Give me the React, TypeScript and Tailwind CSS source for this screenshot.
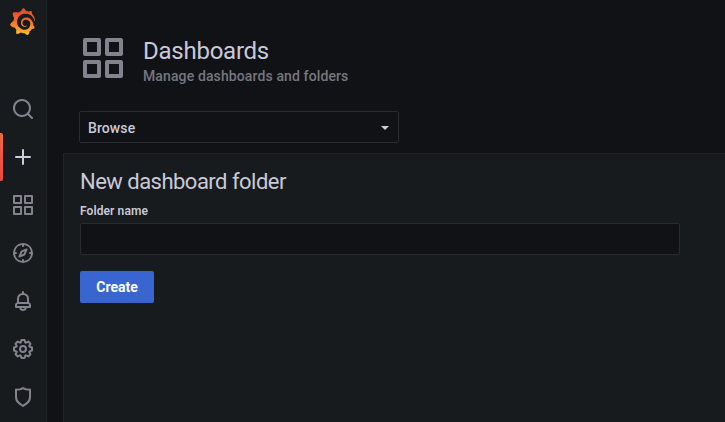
import React from 'react';
import { SiGrafana } from 'react-icons/si';

const icons = {
  search:
    'M21.71,20.29,18,16.61A9,9,0,1,0,16.61,18l3.68,3.68a1,1,0,0,0,1.42,0A1,1,0,0,0,21.71,20.29ZM11,18a7,7,0,1,1,7-7A7,7,0,0,1,11,18Z',
  plus: 'M19,11H13V5a1,1,0,0,0-2,0v6H5a1,1,0,0,0,0,2h6v6a1,1,0,0,0,2,0V13h6a1,1,0,0,0,0-2Z',
  apps: 'M10,13H3a1,1,0,0,0-1,1v7a1,1,0,0,0,1,1h7a1,1,0,0,0,1-1V14A1,1,0,0,0,10,13ZM9,20H4V15H9ZM21,2H14a1,1,0,0,0-1,1v7a1,1,0,0,0,1,1h7a1,1,0,0,0,1-1V3A1,1,0,0,0,21,2ZM20,9H15V4h5Zm1,4H14a1,1,0,0,0-1,1v7a1,1,0,0,0,1,1h7a1,1,0,0,0,1-1V14A1,1,0,0,0,21,13Zm-1,7H15V15h5ZM10,2H3A1,1,0,0,0,2,3v7a1,1,0,0,0,1,1h7a1,1,0,0,0,1-1V3A1,1,0,0,0,10,2ZM9,9H4V4H9Z',
  compass:
    'M12,2A10,10,0,1,0,22,12,10,10,0,0,0,12,2Zm1,17.93V19a1,1,0,0,0-2,0v.93A8,8,0,0,1,4.07,13H5a1,1,0,0,0,0-2H4.07A8,8,0,0,1,11,4.07V5a1,1,0,0,0,2,0V4.07A8,8,0,0,1,19.93,11H19a1,1,0,0,0,0,2h.93A8,8,0,0,1,13,19.93ZM15.14,7.55l-5,2.12a1,1,0,0,0-.52.52l-2.12,5a1,1,0,0,0,.21,1.1,1,1,0,0,0,.7.3.93.93,0,0,0,.4-.09l5-2.12a1,1,0,0,0,.52-.52l2.12-5a1,1,0,0,0-1.31-1.31Zm-2.49,5.1-2.28,1,1-2.28,2.28-1Z',
  bell: 'M18,13.18V10a6,6,0,0,0-5-5.91V3a1,1,0,0,0-2,0V4.09A6,6,0,0,0,6,10v3.18A3,3,0,0,0,4,16v2a1,1,0,0,0,1,1H8.14a4,4,0,0,0,7.72,0H19a1,1,0,0,0,1-1V16A3,3,0,0,0,18,13.18ZM8,10a4,4,0,0,1,8,0v3H8Zm4,10a2,2,0,0,1-1.72-1h3.44A2,2,0,0,1,12,20Zm6-3H6V16a1,1,0,0,1,1-1H17a1,1,0,0,1,1,1Z',
  cog: 'M21.32,9.55l-1.89-.63.89-1.78A1,1,0,0,0,20.13,6L18,3.87a1,1,0,0,0-1.15-.19l-1.78.89-.63-1.89A1,1,0,0,0,13.5,2h-3a1,1,0,0,0-.95.68L8.92,4.57,7.14,3.68A1,1,0,0,0,6,3.87L3.87,6a1,1,0,0,0-.19,1.15l.89,1.78-1.89.63A1,1,0,0,0,2,10.5v3a1,1,0,0,0,.68.95l1.89.63-.89,1.78A1,1,0,0,0,3.87,18L6,20.13a1,1,0,0,0,1.15.19l1.78-.89.63,1.89a1,1,0,0,0,.95.68h3a1,1,0,0,0,.95-.68l.63-1.89,1.78.89A1,1,0,0,0,18,20.13L20.13,18a1,1,0,0,0,.19-1.15l-.89-1.78,1.89-.63A1,1,0,0,0,22,13.5v-3A1,1,0,0,0,21.32,9.55ZM20,12.78l-1.2.4A2,2,0,0,0,17.64,16l.57,1.14-1.1,1.1L16,17.64a2,2,0,0,0-2.79,1.16l-.4,1.2H11.22l-.4-1.2A2,2,0,0,0,8,17.64l-1.14.57-1.1-1.1L6.36,16A2,2,0,0,0,5.2,13.18L4,12.78V11.22l1.2-.4A2,2,0,0,0,6.36,8L5.79,6.89l1.1-1.1L8,6.36A2,2,0,0,0,10.82,5.2l.4-1.2h1.56l.4,1.2A2,2,0,0,0,16,6.36l1.14-.57,1.1,1.1L17.64,8a2,2,0,0,0,1.16,2.79l1.2.4ZM12,8a4,4,0,1,0,4,4A4,4,0,0,0,12,8Zm0,6a2,2,0,1,1,2-2A2,2,0,0,1,12,14Z',
  shield:
    'M19.63,3.65a1,1,0,0,0-.84-.2,8,8,0,0,1-6.22-1.27,1,1,0,0,0-1.14,0A8,8,0,0,1,5.21,3.45a1,1,0,0,0-.84.2A1,1,0,0,0,4,4.43v7.45a9,9,0,0,0,3.77,7.33l3.65,2.6a1,1,0,0,0,1.16,0l3.65-2.6A9,9,0,0,0,20,11.88V4.43A1,1,0,0,0,19.63,3.65ZM18,11.88a7,7,0,0,1-2.93,5.7L12,19.77,8.93,17.58A7,7,0,0,1,6,11.88V5.58a10,10,0,0,0,6-1.39,10,10,0,0,0,6,1.39Z',
};

type IconName = keyof typeof icons;

function Icon({ name, className = 'size-6' }: { name: IconName; className?: string }) {
  return (
    <svg viewBox="0 0 24 24" fill="currentColor" className={`shrink-0 ${className}`}>
      <path d={icons[name]} />
    </svg>
  );
}

const navItems: { name: IconName; active?: boolean }[] = [
  { name: 'search' },
  { name: 'plus', active: true },
  { name: 'apps' },
  { name: 'compass' },
  { name: 'bell' },
  { name: 'cog' },
  { name: 'shield' },
];

function Sidebar() {
  return (
    <nav className="flex w-[47px] shrink-0 flex-col border-r border-[#222427] bg-[#171b1d]">
      <svg className="absolute size-0">
        <defs>
          <linearGradient id="logo" x1="0" y1="0" x2="0" y2="1">
            <stop offset="0" stopColor="#ee3f30" />
            <stop offset="0.45" stopColor="#f2672c" />
            <stop offset="1" stopColor="#fbc22c" />
          </linearGradient>
        </defs>
      </svg>
      <div className="flex h-[85px] shrink-0 justify-center pt-2 pr-px">
        <SiGrafana className="size-[27px] fill-[url(#logo)]" />
      </div>
      {navItems.map(({ name, active }) => (
        <button
          key={name}
          className={`relative flex h-12 shrink-0 items-center justify-center ${active ? 'text-[#ccccdc]' : 'text-[#83838e]'}`}
        >
          {active && (
            <span className="absolute top-0 left-0 h-12 w-[3px] rounded-r-[2px] bg-linear-to-b from-[#f1683a] to-[#ea4840]" />
          )}
          <Icon name={name} />
        </button>
      ))}
    </nav>
  );
}

export default function App() {
  return (
    <div className="flex h-[422px] w-[725px] overflow-hidden bg-[#111216] font-[Roboto,sans-serif] text-[#c9c9da]">
      <Sidebar />
      <main className="flex min-w-0 flex-1 flex-col pl-4">
        <header className="flex h-[111px] shrink-0 pt-[34px] pl-4">
          <Icon name="apps" className="size-12 text-[#83838e]" />
          <div className="pl-4">
            <h1 className="pt-[3px] text-2xl leading-[29px] tracking-[-0.25px]">Dashboards</h1>
            <p className="text-sm leading-5 font-medium tracking-[0.12px] text-[#77777f]">
              Manage dashboards and folders
            </p>
          </div>
        </header>
        <div className="ml-4 flex h-8 w-80 shrink-0 items-center justify-between rounded-[2px] border border-[#2a2b30] pr-[9px] pl-2 text-sm font-medium">
          <span className="pt-0.5 tracking-[0.1px]">Browse</span>
          <span className="mt-0.5 border-x-4 border-t-4 border-x-transparent border-t-[#ccccdc]" />
        </div>
        <section className="mt-[10px] flex flex-1 flex-col items-start border-t border-l border-[#222427] bg-[#171b1d] pt-4 pl-4">
          <h2 className="text-[22px] leading-6 tracking-[-0.52px]">New dashboard folder</h2>
          <label
            htmlFor="folder"
            className="mt-2 text-xs leading-[18px] font-semibold tracking-[0.1px]"
          >
            Folder name
          </label>
          <input
            id="folder"
            className="mt-[3px] h-8 w-[600px] rounded-[2px] border border-[#2a2b30] bg-[#111216] px-2 text-sm outline-none"
          />
          <button className="mt-4 h-8 w-[74px] rounded-[2px] bg-[#3865cf] text-sm font-bold text-white">
            Create
          </button>
        </section>
      </main>
    </div>
  );
}
